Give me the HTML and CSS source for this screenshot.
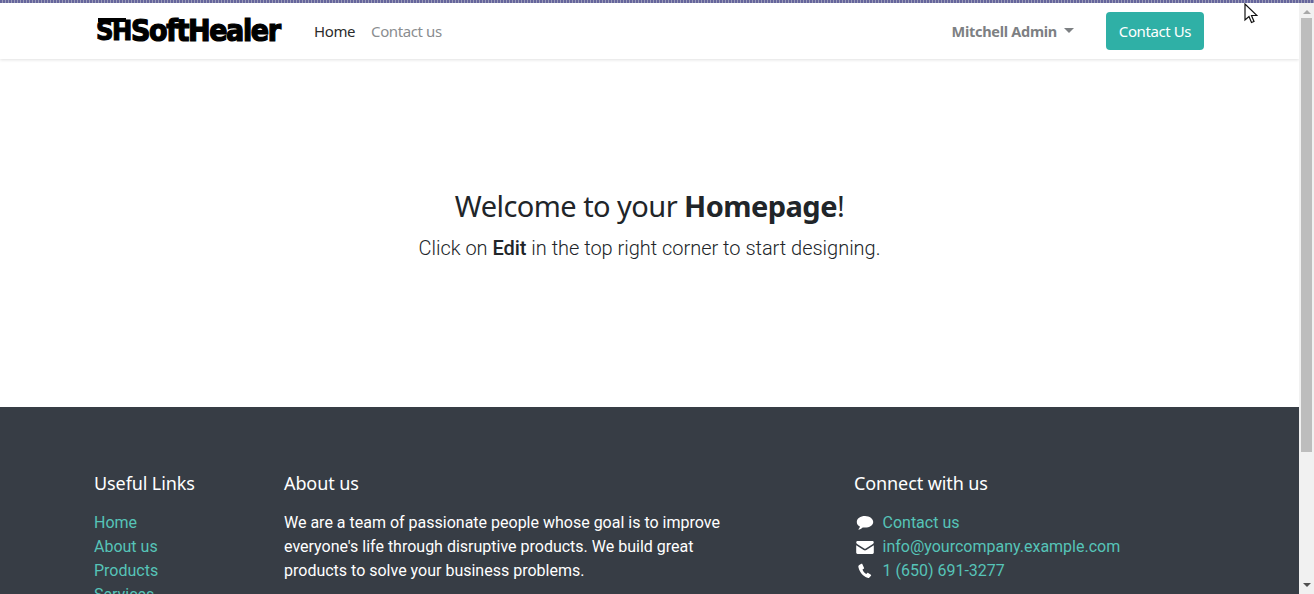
FILE: index.html
```html
<!DOCTYPE html>
<html lang="en">
<head>
<meta charset="utf-8">
<title>Home</title>
<link rel="stylesheet" href="styles.css">
</head>
<body>
<div class="stripe"></div>
<div class="shell">
  <div class="page">
    <header class="header">
      <div class="container header-row">
        <a class="logo"><span class="logo-mark">SH</span><span class="logo-word">SoftHealer</span></a>
        <nav class="nav">
          <a class="nav-link active">Home</a>
          <a class="nav-link">Contact us</a>
        </nav>
        <a class="user">Mitchell Admin<span class="caret"></span></a>
        <a class="cta">Contact Us</a>
      </div>
    </header>
    <main class="hero">
      <h1 class="hero-title">Welcome to your <b>Homepage</b>!</h1>
      <p class="hero-sub">Click on <b>Edit</b> in the top right corner to start designing.</p>
    </main>
    <footer class="footer">
      <div class="container footer-row">
        <div class="col-links">
          <h5 class="foot-title">Useful Links</h5>
          <ul class="list">
            <li><a>Home</a></li>
            <li><a>About us</a></li>
            <li><a>Products</a></li>
            <li><a>Services</a></li>
          </ul>
        </div>
        <div class="col-about">
          <h5 class="foot-title">About us</h5>
          <p class="about-text">We are a team of passionate people whose goal is to improve everyone's life through disruptive products. We build great products to solve your business problems.</p>
        </div>
        <div class="col-connect">
          <h5 class="foot-title">Connect with us</h5>
          <ul class="list">
            <li class="contact"><svg class="ic" viewBox="0 0 18 16"><path d="M9 1C4.400 1 .8 3.600.8 6.900c0 1.900 1.200 3.600 3.100 4.700-.2 1.300-1 2.300-1.800 3 1.900-.2 3.500-1 4.600-2.200.7.100 1.500.2 2.300.2 4.600 0 8.200-2.600 8.200-5.700S13.600 1 9 1z" fill="#fff"/></svg><a>Contact us</a></li>
            <li class="contact"><svg class="ic" viewBox="0 0 18 16"><path d="M1.500 2h15c.7 0 1.300.6 1.300 1.300 0 .7-.4 1.200-.9 1.600L9.800 9.500c-.5.300-1.100.3-1.600 0L1.100 4.900C.6 4.500.2 4 .2 3.300.2 2.600.8 2 1.500 2zM.2 6.200l7.400 4.800c.9.500 1.900.5 2.800 0l7.400-4.800v7.300c0 .8-.6 1.400-1.300 1.400h-15C.8 14.900.2 14.300.2 13.500z" fill="#fff"/></svg><a>info@yourcompany.example.com</a></li>
            <li class="contact"><svg class="ic" viewBox="0 0 18 16"><path d="M5.400.8 3.200 2C2.400 2.500 2.200 3.500 2.500 4.400c1.100 4.500 4.300 8.400 8.800 10.400.8.300 1.600.2 2.100-.4l1.600-1.700c.3-.3.200-.8-.1-1l-2.700-1.800c-.3-.2-.7-.1-.9.100l-1 1.100C8.700 10.400 7.200 8.500 6.500 6.500l1.200-.7c.3-.2.500-.6.400-.9L6.400 1.200C6.200.7 5.800.6 5.400.8z" fill="#fff"/></svg><a>1 (650) 691-3277</a></li>
          </ul>
        </div>
      </div>
    </footer>
  </div>
  <div class="scrollbar">
    <div class="arrow up"></div>
    <div class="thumb"></div>
    <div class="arrow down"></div>
  </div>
</div>
<svg class="cursor" viewBox="0 0 14 22" width="14" height="22"><path d="M1 1v16l4-3.500 2.500 6 2.500-1-2.500-6H13z" fill="#fff" stroke="#111" stroke-width="1.200"/></svg>
</body>
</html>
```
FILE: styles.css
```css
* { box-sizing: border-box; }
html, body { margin: 0; height: 594px; overflow: hidden; background: #fff; }
body { font-family: Roboto, "Liberation Sans", sans-serif; font-size: 16px; color: #212529; display: flex; flex-direction: column; }
.stripe { height: 3px; flex: none; background: repeating-linear-gradient(90deg, #66669c 0 2px, #9a9ab8 2px 3px); }
.shell { flex: 1; display: flex; min-height: 0; }
.page { flex: 1; min-width: 0; overflow: hidden; display: flex; flex-direction: column; }
.container { width: 1140px; margin: 0 0 0 79px; padding: 0 15px; }

.header { flex: none; height: 56px; background: #fff; box-shadow: 0 1px 3px rgba(0,0,0,.12); position: relative; }
.header-row { display: flex; align-items: center; height: 56px; }
.logo { width: 220px; padding-left: 2px; display: flex; align-items: center; color: #000; white-space: nowrap; font-family: "DejaVu Sans Condensed", "DejaVu Sans", sans-serif; font-weight: 700; }
.logo-mark { position: relative; width: 35px; flex: none; font-size: 27px; line-height: 30px; letter-spacing: -1.500px; -webkit-text-stroke: 1px #000; }
.logo-mark::before { content: ""; position: absolute; left: 2px; top: 2px; width: 28px; height: 4px; background: #000; }
.logo-word { font-size: 30px; line-height: 30px; letter-spacing: -1.400px; -webkit-text-stroke: 1.200px #000; }
.nav { display: flex; gap: 16px; flex: 1; font-family: "Noto Sans", sans-serif; font-size: 15px; letter-spacing: -.4px; }
.nav-link { color: #8a8d90; }
.nav-link.active { color: #2b2b2b; }
.user { font-family: "Noto Sans", sans-serif; font-weight: 700; font-size: 14.500px; letter-spacing: -.28px; color: #7d8083; display: flex; align-items: center; margin-right: 32px; }
.user { padding-left: 1px; }
.caret { width: 0; height: 0; margin-left: 7px; margin-top: -2px; border: 5px solid transparent; border-top-color: #7d8083; border-bottom: 0; }
.cta { width: 98px; height: 38px; border-radius: 4px; background: #2fb0a6; color: #fff; display: flex; align-items: center; justify-content: center; font-family: "Noto Sans", sans-serif; font-size: 15px; letter-spacing: -.4px; }

.hero { flex: none; height: 348px; display: flex; flex-direction: column; align-items: center; justify-content: center; padding-bottom: 15px; }
.hero-title { margin: 0 0 9px; font-family: "Noto Sans", sans-serif; font-weight: 400; font-size: 29px; line-height: 36px; letter-spacing: -.55px; color: #212529; }
.hero-title b { font-weight: 700; }
.hero-sub { margin: 0; font-weight: 300; font-size: 20px; line-height: 30px; letter-spacing: -.02px; color: #212529; }
.hero-sub b { font-weight: 500; }

.footer { flex: 1; background: #373d45; color: #fff; padding-top: 64px; }
.footer-row { display: flex; }
.col-links { width: 190px; flex: none; }
.col-about { width: 570px; flex: none; padding-right: 125px; }
.col-connect { flex: 1; }
.foot-title { margin: 0 0 16px; font-family: "Noto Sans", sans-serif; font-weight: 400; font-size: 18px; line-height: 24px; letter-spacing: -.1px; color: #fff; }
.list { list-style: none; margin: 0; padding: 0; line-height: 24px; color: #56c4b8; }
.about-text { margin: 0; line-height: 24px; color: #fff; }
.contact { display: flex; align-items: center; }
.ic { width: 18px; height: 16px; margin: 0 8.500px 0 2px; flex: none; }

.scrollbar { flex: none; width: 15px; background: #f1f1f1; display: flex; flex-direction: column; align-items: center; }
.thumb { width: 11px; height: 434px; background: #bdbdbd; margin-top: 4px; }
.arrow { flex: none; width: 0; height: 0; border-left: 4px solid transparent; border-right: 4px solid transparent; }
.arrow.up { margin-top: 7px; border-bottom: 4px solid #a8a8a8; }
.arrow.down { margin-top: auto; margin-bottom: 7px; border-top: 4px solid #505050; }
.cursor { position: absolute; left: 1244px; top: 3px; }
```
